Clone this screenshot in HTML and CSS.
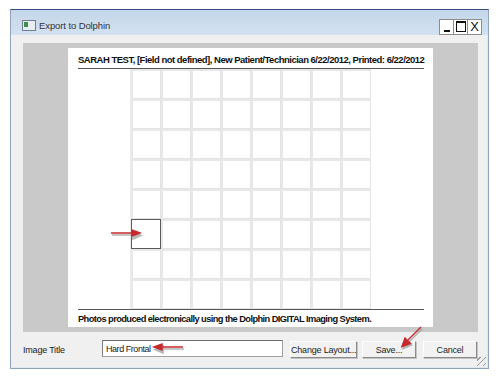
FILE: index.html
```html
<!DOCTYPE html>
<html lang="en">
<head>
  <meta charset="UTF-8" />
  <title>Export to Dolphin</title>
  <link rel="stylesheet" href="styles.css">
</head>
<body>
  <div class="window">
    <!-- Title bar -->
    <div class="titlebar">
      <span class="app-icon"><span class="app-icon-mark"></span></span>
      <span class="title">Export to Dolphin</span>
      <div class="controls">
        <span class="ctl ctl-min"></span>
        <span class="ctl ctl-max"><span class="max-box"></span></span>
        <span class="ctl ctl-close">X</span>
      </div>
    </div>

    <div class="client">
      <!-- Preview -->
      <div class="panel">
        <div class="page">
          <div class="page-header">SARAH TEST, [Field not defined], New Patient/Technician 6/22/2012, Printed: 6/22/2012</div>
          <div class="grid" id="grid"></div>
          <div class="page-footer">Photos produced electronically using the Dolphin DIGITAL Imaging System.</div>
        </div>
      </div>

      <!-- Bottom row -->
      <div class="bottom">
        <label class="field-label" for="imageTitle">Image Title</label>
        <input type="text" id="imageTitle" class="textbox" value="Hard Frontal">
        <button class="btn btn-layout">Change Layout...</button>
        <button class="btn btn-save">Save...</button>
        <button class="btn btn-cancel">Cancel</button>
      </div>
      <span class="grip"></span>
    </div>
  </div>

  <!-- Annotation arrows -->
  <svg class="arrows" width="500" height="380" viewBox="0 0 500 380">
    <g stroke="#9a9a9a" stroke-width="1.6" fill="#9a9a9a" opacity="0.7">
      <line x1="112" y1="235" x2="134" y2="235" />
      <polygon points="141,235.5 133,232 133,239" />
      <line x1="184" y1="349" x2="162" y2="349" />
      <polygon points="155,349.5 163,346 163,353" />
      <line x1="422" y1="329" x2="409" y2="342" />
      <polygon points="403,348.5 406,339.5 411.5,345" />
    </g>
    <g stroke="#c62a2f" stroke-width="1.5" fill="#c62a2f">
      <line x1="111" y1="233" x2="133" y2="233" />
      <polygon points="140,233 132,230 132,236" />
      <line x1="183" y1="347" x2="161" y2="347" />
      <polygon points="154,347 162,344 162,350" />
      <line x1="421" y1="327" x2="408" y2="340" />
      <polygon points="402,346.5 405,338 410.5,343.5" />
    </g>
  </svg>

  <script>
    // Build the 8x8 layout grid; row 6, column 1 is selected
    const grid = document.getElementById("grid");
    for (let r = 0; r < 8; r++) {
      for (let c = 0; c < 8; c++) {
        const cell = document.createElement("div");
        cell.className = (r === 5 && c === 0) ? "cell selected" : "cell";
        grid.appendChild(cell);
      }
    }
  </script>
</body>
</html>
```

FILE: styles.css
```css
body {
  margin: 0;
  background: #ffffff;
  font-family: 'Liberation Sans', Arial, sans-serif;
  color: #222;
}

.window {
  margin: 9px 0 0 10px;
  width: 477px;
  height: 358px;
  border: 1px solid #8ea3c2;
  border-top-color: #34507e;
  background: #dfe8f2;
  display: flex;
  flex-direction: column;
}

/* Title bar */
.titlebar {
  height: 25px;
  box-sizing: border-box;
  padding: 5px 0 0 11px;
  background: linear-gradient(#c5d6e9, #d3e2f1);
  display: flex;
  align-items: center;
}

.app-icon {
  width: 10px;
  height: 7px;
  border: 1px solid #6f7f8f;
  background: #e9eef3;
  display: flex;
  align-items: flex-start;
  padding: 1px;
}

.app-icon-mark {
  width: 4px;
  height: 5px;
  background: #3f8f4a;
}

.title {
  margin-left: 3px;
  font-size: 9.5px;
  letter-spacing: -0.1px;
  color: #333;
}

.controls {
  margin-left: auto;
  margin-right: 6px;
  margin-top: 3px;
  display: flex;
  border: 1px solid #8c8c8c;
  background: #fff;
}

.ctl {
  width: 13px;
  height: 14px;
  border-left: 1px solid #8c8c8c;
  display: flex;
  align-items: center;
  justify-content: center;
  font-size: 13px;
  color: #111;
}

.ctl-min {
  border-left: none;
}

.ctl-min::after {
  content: "";
  width: 6px;
  height: 2px;
  background: #111;
  margin-top: 9px;
}

.max-box {
  width: 8px;
  height: 8px;
  border: 1px solid #111;
  border-top-width: 2px;
}

/* Client area */
.client {
  flex: 1;
  background: #f0f0f0;
  margin: 0 1px 1px 0;
  padding: 8px 9px 0 12px;
  position: relative;
}

.panel {
  height: 284px;
  background: #c9c9c9;
  padding-top: 5px;
  display: flex;
  justify-content: center;
}

.page {
  width: 346px;
  height: 279px;
  background: #fff;
  padding: 0 9px 0 10px;
}

.page-header {
  font-weight: bold;
  font-size: 9.5px;
  letter-spacing: -0.5px;
  color: #111;
  height: 20px;
  line-height: 24px;
  border-bottom: 1px solid #555;
  white-space: nowrap;
}

.grid {
  width: 242px;
  margin: 0 auto;
  display: grid;
  grid-template-columns: repeat(8, 30px);
  grid-auto-rows: 30px;
  border-left: 1px solid #ececec;
}

.cell {
  border: 1px solid #e4e4e4;
  border-left: 2px solid #e8e8e8;
  border-top: 2px solid #e8e8e8;
  background: #fff;
}

.cell.selected {
  border: 1px solid #5c5c5c;
}

.page-footer {
  font-weight: bold;
  font-size: 9.3px;
  letter-spacing: -0.58px;
  color: #111;
  border-top: 1px solid #555;
  height: 18px;
  line-height: 18px;
  white-space: nowrap;
}

/* Bottom row */
.bottom {
  display: flex;
  align-items: center;
  height: 35px;
}

.field-label {
  font-size: 9px;
  letter-spacing: -0.2px;
  color: #222;
  width: 79px;
  padding-top: 1px;
}

.textbox {
  width: 181px;
  height: 17px;
  box-sizing: border-box;
  border: 1px solid #a0a0a0;
  border-top-color: #707070;
  border-left-color: #808080;
  padding: 0 3px;
  font-family: 'Liberation Sans', Arial, sans-serif;
  font-size: 9px;
  letter-spacing: -0.45px;
  color: #222;
  margin-top: -2px;
}

.btn {
  height: 17px;
  box-sizing: border-box;
  padding: 0;
  background: #f2f2f2;
  border: 1px solid #fff;
  border-right-color: #8a8a8a;
  border-bottom-color: #8a8a8a;
  box-shadow: 1px 1px 0 #c4c4c4;
  font-family: 'Liberation Sans', Arial, sans-serif;
  font-size: 9px;
  letter-spacing: -0.2px;
  white-space: nowrap;
  color: #222;
  cursor: pointer;
}

.btn-layout {
  width: 67px;
  margin-left: 7px;
}

.btn-save {
  width: 54px;
  margin-left: 5px;
}

.btn-cancel {
  width: 54px;
  margin-left: 7px;
}

.grip {
  position: absolute;
  right: 1px;
  bottom: 1px;
  width: 9px;
  height: 9px;
  background: repeating-linear-gradient(135deg, transparent 0 2px, #9a9a9a 2px 3px, transparent 3px 4px);
}

.arrows {
  position: absolute;
  left: 0;
  top: 0;
  pointer-events: none;
}
```
